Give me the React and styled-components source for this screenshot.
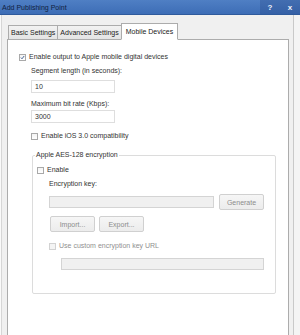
import React from 'react'
import styled, { createGlobalStyle } from 'styled-components'

const Global = createGlobalStyle`
    html, body { margin: 0; padding: 0; }
    body { font-family: "Liberation Sans", Arial, sans-serif; }
`;

function Check({ checked, disabled }) {
    return (
        <Box disabled={disabled}>
            {checked && (
                <svg width="7" height="7" viewBox="0 0 7 7">
                    <path d="M1.2 3.6 L2.8 5.3 L5.8 1.4" fill="none" stroke="#2d4f86" strokeWidth="1.2" />
                </svg>
            )}
        </Box>
    )
}

function App() {
    return (
        <Window>
            <Global />
            <TitleBar>
                <span>Add Publishing Point</span>
                <div className="caption">
                    <span>?</span>
                    <span>x</span>
                </div>
            </TitleBar>
            <Body>
                <TabStrip>
                    <Tab>Basic Settings</Tab>
                    <Tab>Advanced Settings</Tab>
                    <Tab active>Mobile Devices</Tab>
                </TabStrip>
                <Panel>
                    <CheckRow>
                        <Check checked />
                        <Label>Enable output to Apple mobile digital devices</Label>
                    </CheckRow>
                    <Indent>
                        <Label top={4}>Segment length (in seconds):</Label>
                        <Input top={4} width={84}>10</Input>
                        <Label top={6}>Maximum bit rate (Kbps):</Label>
                        <Input top={1} width={84}>3000</Input>
                        <CheckRow top={8}>
                            <Check />
                            <Label>Enable iOS 3.0 compatibility</Label>
                        </CheckRow>
                        <Group>
                            <Legend>Apple AES-128 encryption</Legend>
                            <CheckRow>
                                <Check />
                                <Label>Enable</Label>
                            </CheckRow>
                            <Inner>
                                <Label top={4}>Encryption key:</Label>
                                <KeyRow>
                                    <Input disabled width={165} />
                                    <Button>Generate</Button>
                                </KeyRow>
                                <ButtonRow>
                                    <Button>Import...</Button>
                                    <Button>Export...</Button>
                                </ButtonRow>
                                <CheckRow top={9}>
                                    <Check disabled />
                                    <Label disabled>Use custom encryption key URL</Label>
                                </CheckRow>
                                <UrlInput disabled width={203} />
                            </Inner>
                        </Group>
                    </Indent>
                </Panel>
            </Body>
        </Window>
    )
}

const Window = styled.div`
    width: 300px;
    height: 335px;
    background: #f0f0f0;
    display: flex;
    flex-direction: column;
    overflow: hidden;
    color: #333;
    font-size: 7px;
`;

const TitleBar = styled.div`
    height: 14px;
    flex: none;
    background: linear-gradient(#4f7fc4, #3d6db6);
    border-bottom: 1px solid #2f5a9c;
    display: flex;
    align-items: center;
    justify-content: space-between;
    padding-left: 2px;
    color: #10213f;
    font-size: 7px;

    .caption{
        display: flex;
        height: 100%;
        background: rgba(30, 60, 120, 0.25);
        span{
            width: 20px;
            display: flex;
            align-items: center;
            justify-content: center;
            color: #eef3fb;
            font-weight: bold;
            font-size: 8px;
        }
    }
`;

const Body = styled.div`
    flex: 1;
    display: flex;
    flex-direction: column;
    padding: 7px 11px 0 7px;
    box-shadow: inset 1px 0 #fafafa, inset 2px 0 #d6d6d6, inset -6px 0 #f4f4f4, inset -7px 0 #c9c9c9;
`;

const TabStrip = styled.div`
    display: flex;
    align-items: flex-end;
    height: 17px;
    padding-left: 1px;
    position: relative;
    z-index: 1;
`;

const Tab = styled.div`
    height: ${p => p.active ? 17 : 14}px;
    box-sizing: border-box;
    display: flex;
    align-items: center;
    padding: 0 ${p => p.active ? 4 : 2}px;
    margin-right: -1px;
    border: 1px solid #acacac;
    border-bottom: ${p => p.active ? '1px solid #fff' : 'none'};
    margin-bottom: ${p => p.active ? -1 : 0}px;
    background: ${p => p.active ? '#fff' : 'linear-gradient(#f2f2f2, #e4e4e4)'};
    color: #222;
    white-space: nowrap;
`;

const Panel = styled.div`
    flex: 1;
    background: #fff;
    border: 1px solid #acacac;
    border-bottom: none;
    padding: 12px 0 0 11px;
`;

const CheckRow = styled.div`
    display: flex;
    align-items: center;
    gap: 3px;
    height: 10px;
    margin-top: ${p => p.top || 0}px;
`;

const Box = styled.div`
    width: 7px;
    height: 7px;
    box-sizing: border-box;
    border: 1px solid ${p => p.disabled ? '#d2d2d2' : '#a9a9a9'};
    background: ${p => p.disabled ? '#f4f4f4' : 'linear-gradient(#f4f4f4, #fff)'};
    display: flex;
    align-items: center;
    justify-content: center;
    svg{ display: block; }
`;

const Label = styled.div`
    height: 10px;
    line-height: 10px;
    margin-top: ${p => p.top || 0}px;
    color: ${p => p.disabled ? '#8f8f8f' : '#333'};
    white-space: nowrap;
`;

const Indent = styled.div`
    margin-left: 12px;
    display: flex;
    flex-direction: column;
    align-items: flex-start;
`;

const Input = styled.div`
    width: ${p => p.width}px;
    height: ${p => p.disabled ? 12 : 13}px;
    box-sizing: border-box;
    margin-top: ${p => p.top || 0}px;
    border: 1px solid ${p => p.disabled ? '#d4d4d4' : '#dedede'};
    background: ${p => p.disabled ? '#f0f0f0' : '#fff'};
    padding-left: 3px;
    line-height: 11px;
    color: #333;
`;

const Group = styled.div`
    position: relative;
    margin: 14px 0 0 1px;
    width: 244px;
    box-sizing: border-box;
    border: 1px solid #dcdcdc;
    border-radius: 2px;
    padding: 9px 0 23px 4px;
`;

const Legend = styled.div`
    position: absolute;
    top: -6px;
    left: 2px;
    padding: 0 1px;
    height: 10px;
    line-height: 10px;
    background: #fff;
    color: #333;
`;

const Inner = styled.div`
    margin-left: 12px;
    display: flex;
    flex-direction: column;
    align-items: flex-start;
`;

const KeyRow = styled.div`
    display: flex;
    align-items: center;
    gap: 5px;
    margin-top: 5px;
`;

const Button = styled.div`
    width: 45px;
    height: 16px;
    box-sizing: border-box;
    border: 1px solid #d0d0d0;
    border-radius: 2px;
    background: linear-gradient(#f6f6f6, #ececec);
    color: #8c8c8c;
    display: flex;
    align-items: center;
    justify-content: center;
`;

const ButtonRow = styled.div`
    display: flex;
    gap: 4px;
    margin: 6px 0 0 1px;
`;

const UrlInput = styled(Input)`
    margin: 7px 0 0 12px;
`;

export default App
